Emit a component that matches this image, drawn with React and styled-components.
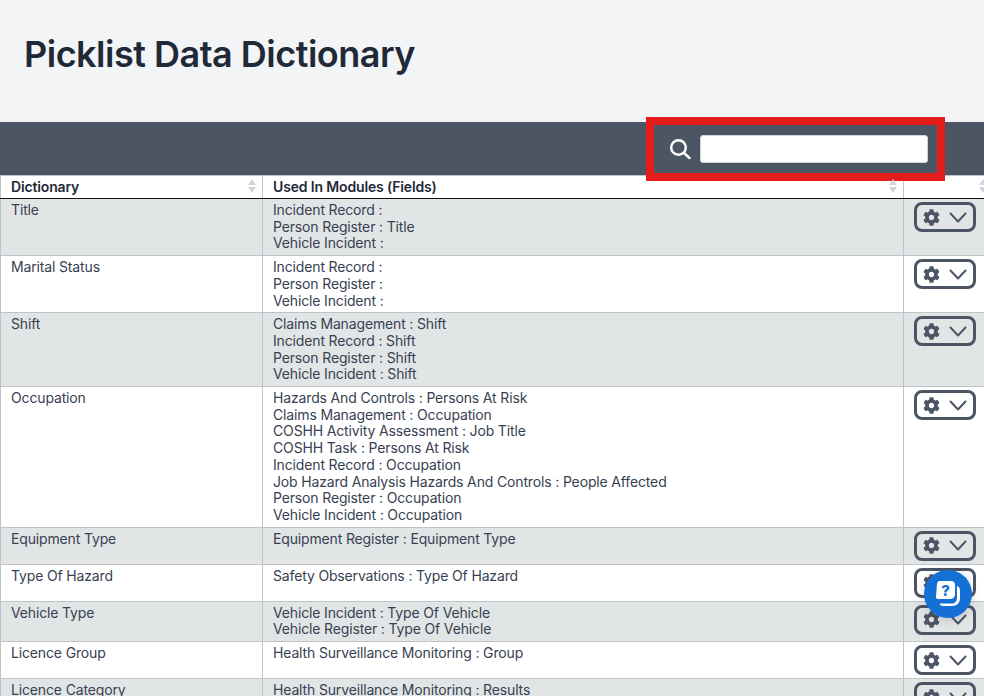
import React from 'react';
import styled, { createGlobalStyle } from 'styled-components';
import { FaCog } from 'react-icons/fa';

const Global = createGlobalStyle`
  html, body { margin: 0; padding: 0; height: 696px; overflow: hidden; background: #fff; }
  body { font-family: Inter, "Liberation Sans", sans-serif; }
`;
const Page = styled.div`width: 984px; height: 696px; overflow: hidden; position: relative;`;
const Header = styled.header`height: 122px; background: #f3f4f6; box-sizing: border-box; padding: 32px 24px 0;`;
const Title = styled.h1`margin: 0; font-size: 36px; line-height: 44px; font-weight: 600; color: #1f2937; letter-spacing: -0.5px;`;
const Toolbar = styled.div`height: 53px; background: #4b5563; display: flex; justify-content: flex-end; align-items: center; padding-right: 56px; box-sizing: border-box;`;
const Search = styled.div`position: relative; display: flex; align-items: center; gap: 9px; margin-top: 0;`;
const Highlight = styled.div`position: absolute; left: -23px; right: -17px; top: -18px; bottom: -18px; border: 8.5px solid #e41c1c; pointer-events: none;`;
const SearchInput = styled.input`width: 228px; height: 28px; box-sizing: border-box; border: 1px solid #d1d5db; border-radius: 3px; background: #fff; padding: 0 6px;`;
const Table = styled.table`border-collapse: collapse; table-layout: fixed; width: 1000px; font-size: 14px; line-height: 16.7px; color: #374151; letter-spacing: -0.15px;`;
const HeadCell = styled.th`position: relative; text-align: left; font-weight: 600; color: #1f2937; height: 23px; padding: 0 10px; border: 1px solid #c0c4c8; border-top-color: #c0c4c8; border-bottom: 1.5px solid #111; box-sizing: border-box; width: ${p => p.$w}px;`;
const SortMark = styled.span`position: absolute; right: 5px; top: 3px; width: 9px; height: 14px;
  &::before, &::after { content: ''; position: absolute; left: 0; border-left: 4.5px solid transparent; border-right: 4.5px solid transparent; }
  &::before { top: 0; border-bottom: 6px solid #d1d5db; }
  &::after { bottom: 0; border-top: 6px solid #d1d5db; }
`;
const Row = styled.tr`background: ${p => (p.$alt ? '#e2e5e6' : '#fff')};`;
const Cell = styled.td`vertical-align: top; padding: 3px 10px 3px; border: 1px solid #c0c4c8; box-sizing: border-box;`;
const ActionCell = styled(Cell)`padding: 3px 0 3px 10px;`;
const FieldLine = styled.div`white-space: nowrap;`;
const ActionButton = styled.button`width: 62px; height: 30px; box-sizing: border-box; border: 3px solid #4b5563; border-radius: 8px; background: transparent; color: #4b5563; padding: 0 0 0 6px; display: flex; align-items: center; gap: 9px;`;
const Help = styled.div`position: absolute; left: 924px; top: 570px; width: 48px; height: 48px; border-radius: 50%; background: #1570d6; display: flex; align-items: center; justify-content: center; box-shadow: 0 2px 12px rgba(0,0,0,.15);`;

const rows = [
  ['Title', ['Incident Record :', 'Person Register : Title', 'Vehicle Incident :']],
  ['Marital Status', ['Incident Record :', 'Person Register :', 'Vehicle Incident :']],
  ['Shift', ['Claims Management : Shift', 'Incident Record : Shift', 'Person Register : Shift', 'Vehicle Incident : Shift']],
  ['Occupation', ['Hazards And Controls : Persons At Risk', 'Claims Management : Occupation', 'COSHH Activity Assessment : Job Title', 'COSHH Task : Persons At Risk', 'Incident Record : Occupation', 'Job Hazard Analysis Hazards And Controls : People Affected', 'Person Register : Occupation', 'Vehicle Incident : Occupation']],
  ['Equipment Type', ['Equipment Register : Equipment Type']],
  ['Type Of Hazard', ['Safety Observations : Type Of Hazard']],
  ['Vehicle Type', ['Vehicle Incident : Type Of Vehicle', 'Vehicle Register : Type Of Vehicle']],
  ['Licence Group', ['Health Surveillance Monitoring : Group']],
  ['Licence Category', ['Health Surveillance Monitoring : Results']],
];

const SearchIcon = () => (
  <svg width="22" height="22" viewBox="0 0 22 22" fill="none" stroke="#fff" strokeWidth="2.4" strokeLinecap="round">
    <circle cx="9.5" cy="9.5" r="7.3" />
    <path d="M15 15l5.5 5" />
  </svg>
);
const Chevron = () => (
  <svg width="18" height="11" viewBox="0 0 18 11" fill="none" stroke="#4b5563" strokeWidth="2" strokeLinecap="round" strokeLinejoin="round">
    <path d="M1.5 1.5L9 9.5l7.5-8" />
  </svg>
);
const HelpIcon = () => (
  <svg width="28" height="30" viewBox="0 0 28 30">
    <path d="M23 7c2.5 1 3 2.5 3 5v7c0 5-3 8-8 8H9c-2 0-3.500-1-3-2.500h11c4 0 6-2 6-6z" fill="#fff" />
    <path d="M6 2h11c2.500 0 4 1.500 4 4v9c0 3-2 5-5 5H4c-1.500 0-2.500-1-2-2.500L3 5c.3-2 1.300-3 3-3z" fill="#fff" />
    <text x="11.500" y="16.500" fontFamily="Inter, sans-serif" fontSize="15" fontWeight="800" fill="#1570d6" textAnchor="middle">?</text>
  </svg>
);

export default function App() {
  return (
    <Page>
      <Global />
      <Header><Title>Picklist Data Dictionary</Title></Header>
      <Toolbar>
        <Search>
          <Highlight />
          <SearchIcon />
          <SearchInput aria-label="Search" />
        </Search>
      </Toolbar>
      <Table>
        <thead>
          <tr>
            <HeadCell $w={262}>Dictionary<SortMark /></HeadCell>
            <HeadCell $w={641}>Used In Modules (Fields)<SortMark /></HeadCell>
            <HeadCell $w={97}><SortMark style={{ right: 12 }} /></HeadCell>
          </tr>
        </thead>
        <tbody>
          {rows.map(([name, fields], i) => (
            <Row key={name} $alt={i % 2 === 0}>
              <Cell>{name}</Cell>
              <Cell>{fields.map(f => <FieldLine key={f}>{f}</FieldLine>)}</Cell>
              <ActionCell>
                <ActionButton aria-label="Actions"><FaCog size={17} /><Chevron /></ActionButton>
              </ActionCell>
            </Row>
          ))}
        </tbody>
      </Table>
      <Help><HelpIcon /></Help>
    </Page>
  );
}
